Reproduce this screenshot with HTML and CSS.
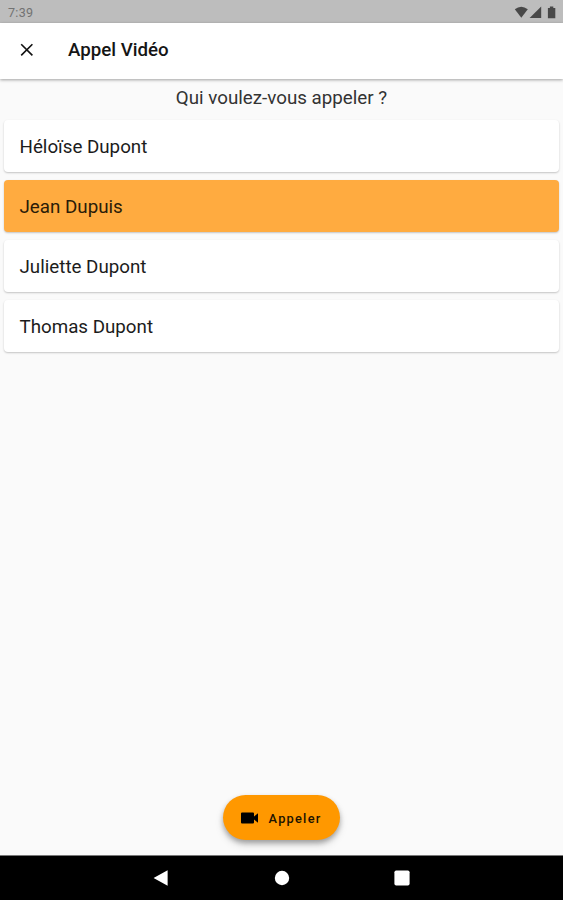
FILE: index.html
```html
<!DOCTYPE html>
<html lang="fr">
<head>
<meta charset="utf-8">
<title>Appel Vidéo</title>
<link rel="stylesheet" href="styles.css">
</head>
<body>
<div class="status">
  <span class="time">7:39</span>
  <svg class="status-icons" width="44" height="14" viewBox="0 0 44 14" fill="#484848">
    <path d="M.8 3.3Q7.2-1.7 13.8 3.3L7.3 11.8z"/>
    <path d="M27.2.5v11.5H15.6z"/>
    <path d="M33.9 1.9h2V.5h3.4v1.4h2v10.4h-7.4z"/>
  </svg>
</div>
<header class="appbar">
  <svg class="close" width="14" height="14" viewBox="0 0 14 14" fill="none" stroke="#111" stroke-width="1.6"><path d="M1.2 1.2l11.2 11.2M12.4 1.2L1.2 12.4"/></svg>
  <h1 class="title">Appel Vidéo</h1>
</header>
<main class="content">
  <p class="question">Qui voulez-vous appeler ?</p>
  <ul class="contacts">
    <li class="card">Héloïse Dupont</li>
    <li class="card selected">Jean Dupuis</li>
    <li class="card">Juliette Dupont</li>
    <li class="card">Thomas Dupont</li>
  </ul>
  <button class="call" type="button">
    <svg width="18" height="12" viewBox="0 0 18 12"><path d="M1 .5h11q1 0 1 1v3L17 1.3v9.4L13 7.5v3q0 1-1 1H1q-1 0-1-1v-9q0-1 1-1z"/></svg>
    <span>Appeler</span>
  </button>
</main>
<nav class="navbar">
  <svg width="16" height="18" viewBox="0 0 16 18" fill="#fff"><path d="M14.6 1.2v15.6L.6 9z"/></svg>
  <svg width="16" height="16" viewBox="0 0 16 16" fill="#fff"><circle cx="8" cy="8" r="7.2"/></svg>
  <svg width="16" height="16" viewBox="0 0 16 16" fill="#fff"><rect x=".4" y=".4" width="15.2" height="15.2" rx="1.8"/></svg>
</nav>
</body>
</html>
```
FILE: styles.css
```css
* { box-sizing: border-box; }
body {
  margin: 0;
  height: 900px;
  display: flex;
  flex-direction: column;
  overflow: hidden;
  background: #fafafa;
  color: #1c1c1c;
  font-family: Roboto, "Liberation Sans", sans-serif;
}
.status {
  height: 23px;
  flex: none;
  display: flex;
  justify-content: space-between;
  align-items: center;
  padding: 2px 5px 0 8px;
  background: #bdbdbd;
}
.time { font-size: 12.5px; line-height: 20px; letter-spacing: .3px; color: #727272; }
.appbar {
  height: 56px;
  flex: none;
  display: flex;
  align-items: center;
  padding: 0 20px 3px;
  background: #fff;
  box-shadow: 0 1px 3px rgba(0, 0, 0, .36);
}
.title { margin: 0 0 0 34px; font-size: 18.7px; line-height: 24px; font-weight: 500; color: #151515; }
.content { flex: 1; display: flex; flex-direction: column; align-items: center; }
.question { margin: 7px 0 0; font-size: 18.75px; line-height: 24px; color: #333; }
.contacts {
  align-self: stretch;
  list-style: none;
  margin: 10px 4px 0;
  padding: 0;
  display: grid;
  gap: 8px;
}
.card {
  height: 52px;
  display: flex;
  align-items: center;
  padding: 2px 15px 0 15.5px;
  border-radius: 4px;
  background: #fff;
  box-shadow: 0 1px 2px rgba(0, 0, 0, .22);
  font-size: 18.75px;
}
.selected { background: #ffab40; color: #2b1c08; }
.call {
  width: 117px;
  height: 45px;
  margin: auto 1px 15px 0;
  padding: 0 18px;
  display: flex;
  align-items: center;
  gap: 10px;
  border: 0;
  border-radius: 23px;
  background: #ff9800;
  color: #201300;
  box-shadow: 0 3px 5px rgba(0, 0, 0, .28), 0 5px 9px rgba(0, 0, 0, .13);
  font: 500 12.8px Roboto, "Liberation Sans", sans-serif;
  letter-spacing: 1.25px;
}
.call svg { flex: none; }
.call span { padding-top: 1px; }
.navbar {
  height: 45px;
  flex: none;
  display: flex;
  align-items: center;
  justify-content: center;
  gap: 104.5px;
  border-top: 1px solid #777;
  background: #000;
}
```
